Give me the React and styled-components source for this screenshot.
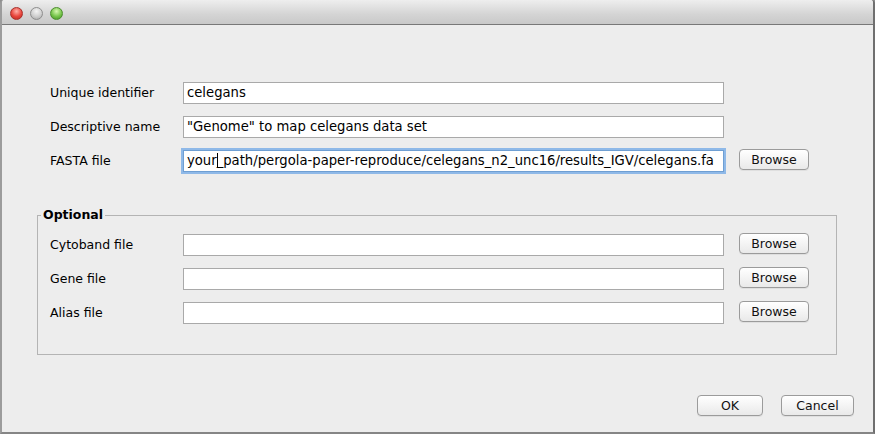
import React from 'react';
import styled, { createGlobalStyle } from 'styled-components';

const GlobalStyle = createGlobalStyle`
  html, body {
    margin: 0;
    padding: 0;
    background: #8f8f8f;
  }
  body {
    font-family: "DejaVu Sans", "Liberation Sans", sans-serif;
    font-size: 12.5px;
    color: #000;
  }
`;

const Window = styled.div`
  width: 875px;
  height: 434px;
  box-sizing: border-box;
  border-left: 2px solid #9c9c9c;
  border-right: 2px solid #6f6f6f;
  border-bottom: 2px solid #858585;
  background: #ededed;
  display: flex;
  flex-direction: column;
  border-top-right-radius: 4px;
  border-top-left-radius: 4px;
  overflow: hidden;
`;

const TitleBar = styled.div`
  height: 24px;
  flex: none;
  display: flex;
  align-items: center;
  gap: 7px;
  padding-left: 8px;
  background: linear-gradient(#eeeeee, #d4d4d4 60%, #c9c9c9);
  border-bottom: 1px solid #787878;
`;

const Light = styled.span`
  width: 13px;
  height: 13px;
  border-radius: 50%;
  box-sizing: border-box;
  border: 1px solid ${(p) => p.edge};
  background: radial-gradient(circle at 50% 30%, ${(p) => p.hi} 0, ${(p) => p.base} 55%, ${(p) => p.low} 100%);
  margin-top: 3px;
`;

const Body = styled.div`
  flex: 1;
  display: flex;
  flex-direction: column;
  padding-top: 57px;
`;

const Rows = styled.div`
  display: flex;
  flex-direction: column;
  gap: 12px;
  padding-left: ${(p) => p.inset}px;
`;

const Row = styled.div`
  display: grid;
  grid-template-columns: 118px 541px 70px;
  column-gap: 15px;
  height: 22px;
  align-items: center;
`;

const Label = styled.span`
  line-height: 22px;
  white-space: nowrap;
`;

const Field = styled.div`
  height: 22px;
  box-sizing: border-box;
  background: #fff;
  border: 1px solid ${(p) => (p.focused ? '#6f9fd3' : '#a9a9a9')};
  box-shadow: ${(p) => (p.focused ? '0 0 0 2px #8fb9e8' : 'none')};
  padding: 0 3px;
  line-height: 20px;
  font-size: 13.2px;
  white-space: nowrap;
  overflow: hidden;
`;

const Caret = styled.span`
  display: inline-block;
  width: 1px;
  height: 15px;
  background: #000;
  vertical-align: -3px;
  margin-right: -1px;
`;

const Button = styled.button`
  font-family: inherit;
  font-size: 12.5px;
  color: #111;
  height: 21px;
  width: ${(p) => p.w || 70}px;
  align-self: start;
  margin-top: -1px;
  box-sizing: border-box;
  border: 1px solid #9b9b9b;
  border-radius: 4px;
  background: linear-gradient(#ffffff, #f4f4f4 50%, #e9e9e9);
  padding: 0;
  box-shadow: 0 1px 0 rgba(0, 0, 0, 0.06);
`;

const Group = styled.fieldset`
  margin: 35px 0 0 35px;
  width: 800px;
  box-sizing: border-box;
  border: 1px solid #b4b4b4;
  padding: 11px 0 30px 12px;
`;

const Legend = styled.legend`
  font-weight: bold;
  padding: 0 2px;
  margin-left: -9px;
  line-height: 16px;
`;

const Footer = styled.div`
  display: flex;
  justify-content: flex-end;
  gap: 18px;
  padding: 41px 19px 0 0;
`;

const main = [
  { label: 'Unique identifier', value: 'celegans' },
  { label: 'Descriptive name', value: '"Genome" to map celegans data set' },
];

const optional = ['Cytoband file', 'Gene file', 'Alias file'];

export default function App() {
  return (
    <>
      <GlobalStyle />
      <Window>
        <TitleBar>
          <Light edge="#a8302b" hi="#ffb0a8" base="#e8453c" low="#b52a22" />
          <Light edge="#8e8e8e" hi="#f4f4f4" base="#cfcfcf" low="#a4a4a4" />
          <Light edge="#4b8e2d" hi="#d6f8b0" base="#76c44a" low="#3f8f22" />
        </TitleBar>
        <Body>
          <Rows inset={48}>
            {main.map((r) => (
              <Row key={r.label}>
                <Label>{r.label}</Label>
                <Field>{r.value}</Field>
              </Row>
            ))}
            <Row>
              <Label>FASTA file</Label>
              <Field focused>
                your<Caret />_path/pergola-paper-reproduce/celegans_n2_unc16/results_IGV/celegans.fa
              </Field>
              <Button>Browse</Button>
            </Row>
          </Rows>
          <Group>
            <Legend>Optional</Legend>
            <Rows inset={0}>
              {optional.map((l) => (
                <Row key={l}>
                  <Label>{l}</Label>
                  <Field />
                  <Button>Browse</Button>
                </Row>
              ))}
            </Rows>
          </Group>
          <Footer>
            <Button w={66}>OK</Button>
            <Button w={73}>Cancel</Button>
          </Footer>
        </Body>
      </Window>
    </>
  );
}
